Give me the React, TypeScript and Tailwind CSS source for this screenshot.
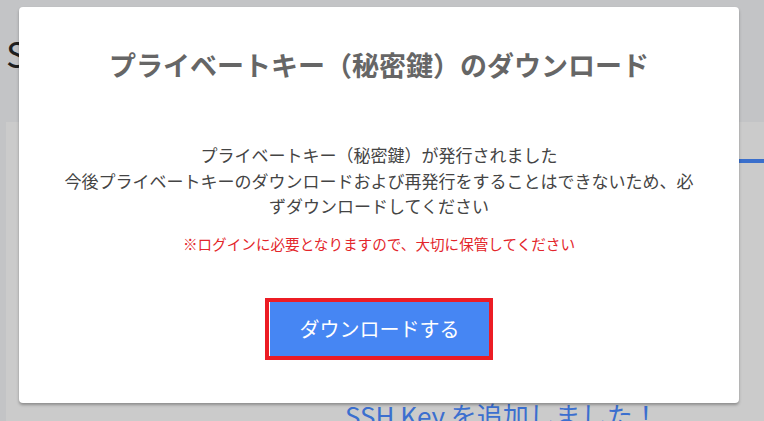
export default function App() {
  return (
    <div
      className="relative h-[421px] w-[764px] overflow-hidden bg-[#c3c4c6]"
      style={{ fontFamily: '"Noto Sans CJK JP", "Noto Sans", sans-serif' }}
    >
      {/* page behind the dialog */}
      <div className="flex h-full flex-col pl-[6px]">
        <div className="h-[122px] pt-[28px] text-[36px] leading-[48px] text-[#1f1f1f]">SSH Keys</div>
        <div className="flex flex-1 flex-col bg-[#cbcbcb]">
          <div className="mt-[37px] ml-auto h-[4px] w-[25px] bg-[#3a6fcc]" />
          <div className="mt-auto -mb-[10px] pl-[339px] text-[26px] leading-[32px] text-[#3b6fcf]">
            SSH Key を追加しました！
          </div>
        </div>
      </div>

      {/* dialog */}
      <div className="absolute left-[19px] top-[7px] flex w-[720px] flex-col items-center rounded-[4px] bg-white px-[40px] pt-[38px] pb-[43px] shadow-[0_2px_3px_rgba(0,0,0,0.3)]">
        <h2 className="text-[27px] font-bold leading-[40px] text-[#666666]">
          プライベートキー（秘密鍵）のダウンロード
        </h2>
        <p className="mt-[57px] text-center text-[17px] leading-[25.5px] text-[#444444]">
          プライベートキー（秘密鍵）が発行されました
          <br />
          今後プライベートキーのダウンロードおよび再発行をすることはできないため、必ずダウンロードしてください
        </p>
        <p className="mt-[14px] text-center text-[14.6px] leading-[21px] text-[#e3262b]">
          ※ログインに必要となりますので、大切に保管してください
        </p>
        <div className="mt-[44px] border-4 border-[#ec1c24]">
          <button className="h-[54px] w-[220px] border-l border-white bg-[#4686f3] text-[20px] text-white">
            ダウンロードする
          </button>
        </div>
      </div>
    </div>
  )
}
